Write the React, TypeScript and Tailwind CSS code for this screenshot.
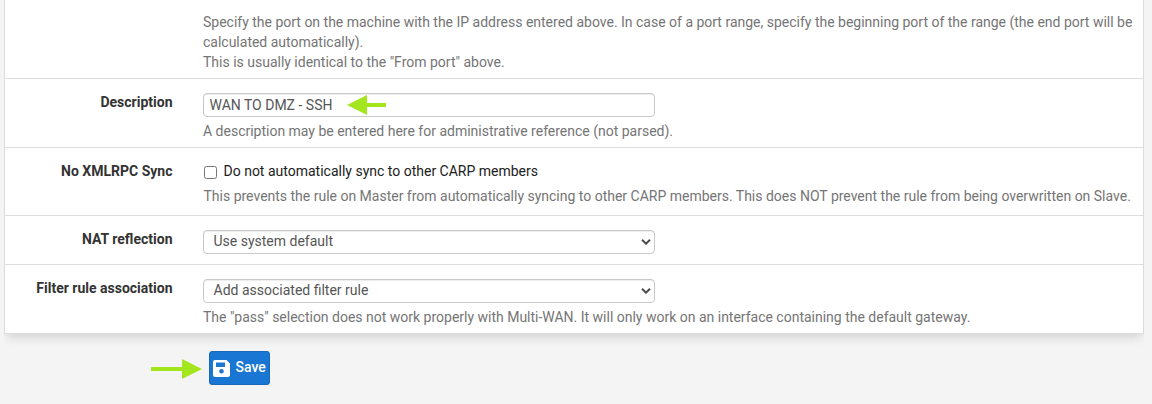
import type { ReactNode } from "react";

function Row({ label, height, children }: { label?: string; height: string; children: ReactNode }) {
  return (
    <div className={`flex border-b border-[#dcdcdc] ${height}`}>
      <div className="w-[167.5px] shrink-0 pt-[13px] text-right font-bold text-[#333]">{label}</div>
      <div className="flex min-w-0 flex-1 flex-col items-start pl-[30.5px] pt-[14px]">{children}</div>
    </div>
  );
}

function Help({ children, className = "mt-1" }: { children: ReactNode; className?: string }) {
  return <p className={`whitespace-nowrap tracking-[-0.005px] text-[#757575] ${className}`}>{children}</p>;
}

function Select({ value }: { value: string }) {
  return (
    <button
      type="button"
      className="flex h-6 w-[452px] items-center justify-between rounded-[4px] border border-[#c8c8c8] bg-white pl-[9.5px] pr-[3px] text-[#555] shadow-[inset_0_1px_1px_rgba(0,0,0,0.075)]"
    >
      <span className="-mt-[2px]">{value}</span>
      <svg width="10" height="6" viewBox="0 0 10 6" fill="none" stroke="#4a4a4a" strokeWidth="2">
        <path d="M1 .8 5 4.6 9 .8" />
      </svg>
    </button>
  );
}

export default function App() {
  return (
    <div className="h-[404px] w-[1152px] overflow-hidden bg-[#f4f4f4] font-[Roboto,sans-serif] text-[14px] leading-5">
      <div className="ml-1 h-[334px] w-[1140px] border-x border-[#dcdcdc] bg-white shadow-[0_6px_10px_-3px_rgba(0,0,0,0.15)] [clip-path:inset(0_0_-20px_0)]">
        <Row height="h-[79px]">
          <Help className="-mt-[2px]">
            Specify the port on the machine with the IP address entered above. In case of a port range, specify the beginning port of the range (the end port will be
            <br />
            calculated automatically).
            <br />
            This is usually identical to the "From port" above.
          </Help>
        </Row>
        <Row label="Description" height="h-[69px]">
          <div className="flex h-6 w-[452px] items-center rounded-[4px] border border-[#c8c8c8] pl-[5.5px] text-[#555] shadow-[inset_0_1px_1px_rgba(0,0,0,0.075)]">
            <span className="w-[137.5px]">WAN TO DMZ - SSH</span>
            <svg width="39" height="20" viewBox="0 0 39 20" fill="#a3e61d">
              <path d="M0 10 20 0v8h19v4H20v8Z" />
            </svg>
          </div>
          <Help>A description may be entered here for administrative reference (not parsed).</Help>
        </Row>
        <Row label="No XMLRPC Sync" height="h-[68px]">
          <label className="-mt-px flex items-center text-[#212121]">
            <input type="checkbox" className="ml-px mr-[6.5px] mt-[2px] h-[13px] w-[13px]" />
            Do not automatically sync to other CARP members
          </label>
          <Help className="ml-[0.5px] mt-[5px]">
            This prevents the rule on Master from automatically syncing to other CARP members. This does NOT prevent the rule from being overwritten on Slave.
          </Help>
        </Row>
        <Row label="NAT reflection" height="h-[49px]">
          <Select value="Use system default" />
        </Row>
        <Row label="Filter rule association" height="h-[69px]">
          <Select value="Add associated filter rule" />
          <Help>The "pass" selection does not work properly with Multi-WAN. It will only work on an interface containing the default gateway.</Help>
        </Row>
      </div>
      <div className="flex items-center pl-[151px] pt-[17px]">
        <svg width="51" height="20" viewBox="0 0 51 20" className="mr-[7px] mt-[2px]" fill="#a3e61d">
          <path d="M0 8h31V0l20 10-20 10v-8H0Z" />
        </svg>
        <button
          type="button"
          className="flex h-[34px] w-[61px] items-center rounded-[3px] border border-[#1769b8] bg-[#1976d2] pl-[3px] font-medium text-white"
        >
          <svg width="17" height="17" viewBox="0 0 17 17" className="mr-[5.5px]">
            <path
              fill="#fff"
              fillRule="evenodd"
              d="M2 0h11.5L17 3.5V15a2 2 0 0 1-2 2H2a2 2 0 0 1-2-2V2A2 2 0 0 1 2 0Zm1 2.5V7h9V2.5ZM8.5 9a2.3 2.3 0 1 0 0 4.6 2.3 2.3 0 0 0 0-4.6Z"
            />
          </svg>
          <span className="-mt-[2px]">Save</span>
        </button>
      </div>
    </div>
  );
}
